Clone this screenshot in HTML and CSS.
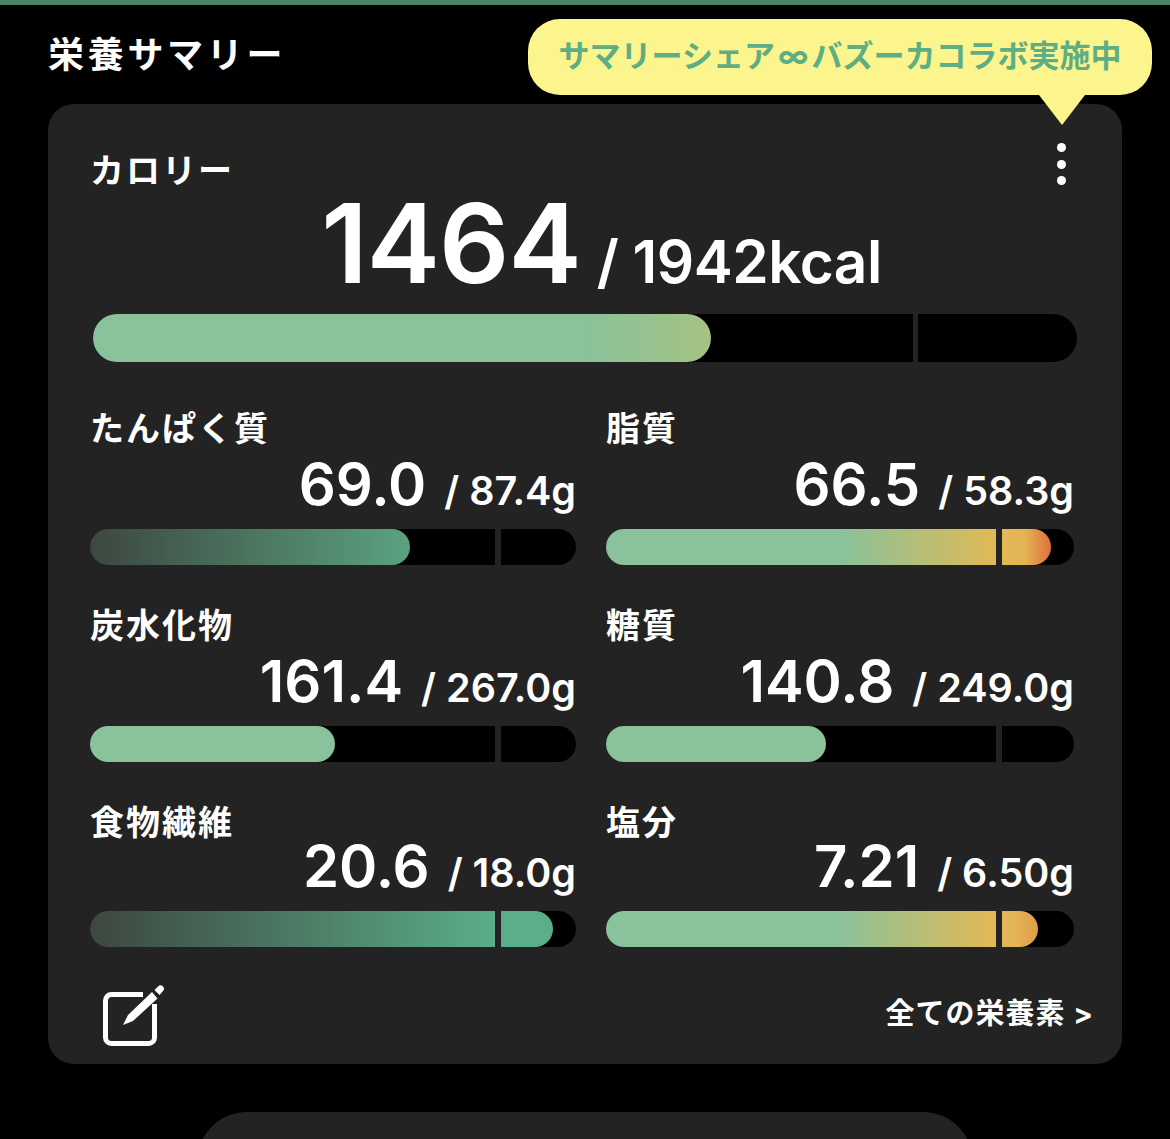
FILE: index.html
```html
<!DOCTYPE html>
<html lang="ja">
<head>
    <meta charset="UTF-8">
    <meta name="viewport" content="width=device-width, initial-scale=1.0">
    <title>栄養サマリー</title>
    <link rel="stylesheet" href="styles.css">
</head>
<body>

    <div class="top-line"></div>

    <div class="page-head">
        <h1>栄養サマリー</h1>
        <!-- Collab bubble -->
        <div class="bubble">サマリーシェア<span class="infinity">∞</span>バズーカコラボ実施中</div>
    </div>

    <div class="card">
        <div class="more"><i></i><i></i><i></i></div>

        <div class="calorie">
            <div class="label">カロリー</div>
            <div class="calorie-value"><b>1464</b><span>/ 1942kcal</span></div>
            <div class="bar bar-main">
                <div class="fill fill-calorie" style="width: 62.8%"></div>
                <div class="tick"></div>
            </div>
        </div>

        <div class="nutrients">
            <div class="nutrient">
                <div class="label">たんぱく質</div>
                <div class="value"><b>69.0</b><span>/ 87.4g</span></div>
                <div class="bar">
                    <div class="fill fill-low" style="width: 65.8%"></div>
                    <div class="tick"></div>
                </div>
            </div>
            <div class="nutrient">
                <div class="label">脂質</div>
                <div class="value"><b>66.5</b><span>/ 58.3g</span></div>
                <div class="bar">
                    <div class="fill fill-over-red" style="width: 95%"></div>
                    <div class="tick"></div>
                </div>
            </div>
            <div class="nutrient">
                <div class="label">炭水化物</div>
                <div class="value"><b>161.4</b><span>/ 267.0g</span></div>
                <div class="bar">
                    <div class="fill fill-good" style="width: 50.4%"></div>
                    <div class="tick"></div>
                </div>
            </div>
            <div class="nutrient">
                <div class="label">糖質</div>
                <div class="value"><b>140.8</b><span>/ 249.0g</span></div>
                <div class="bar">
                    <div class="fill fill-good" style="width: 47%"></div>
                    <div class="tick"></div>
                </div>
            </div>
            <div class="nutrient tight">
                <div class="label">食物繊維</div>
                <div class="value"><b>20.6</b><span>/ 18.0g</span></div>
                <div class="bar">
                    <div class="fill fill-fiber" style="width: 95.3%"></div>
                    <div class="tick"></div>
                </div>
            </div>
            <div class="nutrient tight">
                <div class="label">塩分</div>
                <div class="value"><b>7.21</b><span>/ 6.50g</span></div>
                <div class="bar">
                    <div class="fill fill-over" style="width: 92.3%"></div>
                    <div class="tick"></div>
                </div>
            </div>
        </div>

        <div class="card-foot">
            <svg class="edit-icon" width="64" height="64" viewBox="0 0 64 64">
                <path d="M41 10.500H9.500a6 6 0 0 0-6 6v37a6 6 0 0 0 6 6h37a6 6 0 0 0 6-6V20" fill="none" stroke="#fff" stroke-width="5"/>
                <path d="M21 41 26 31 50 8 55.500 14.500 31 37Z" fill="#fff"/>
                <path d="M52.500 6 56 2.500a3.300 3.300 0 0 1 5 4.500L57.500 11Z" fill="#fff"/>
            </svg>
            <div class="all-link">全ての栄養素 &gt;</div>
        </div>
    </div>

    <div class="next-clip">
        <div class="next-card"></div>
    </div>

</body>
</html>
```

FILE: styles.css
```css
html, body {
    margin: 0;
    padding: 0;
}

body {
    position: relative;
    background-color: #000;
    color: #fff;
    font-family: Inter, "Noto Sans CJK JP", sans-serif;
}

.top-line {
    height: 5px;
    background-color: #4a8467;
}

.page-head {
    height: 99px;
    padding-left: 48px;
}

h1 {
    margin: 0;
    padding-top: 24px;
    font-size: 36px;
    line-height: 52px;
    font-weight: 700;
    letter-spacing: 3.700px;
}

.bubble {
    position: absolute;
    z-index: 2;
    left: 528px;
    top: 19px;
    width: 624px;
    height: 76px;
    border-radius: 32px;
    background-color: #fcf48d;
    color: #5dae84;
    font-size: 31px;
    font-weight: 700;
    line-height: 74px;
    text-align: center;
    white-space: nowrap;
}

.bubble::after {
    content: "";
    position: absolute;
    left: 511px;
    top: 76px;
    border-left: 23px solid transparent;
    border-right: 23px solid transparent;
    border-top: 30px solid #fcf48d;
}

.infinity {
    margin: 0 3px;
}

.card {
    position: relative;
    box-sizing: border-box;
    width: 1074px;
    height: 960px;
    margin-left: 48px;
    padding: 47px 48px 0 42px;
    border-radius: 26px;
    background-color: #232323;
}

.more {
    position: absolute;
    right: 56px;
    top: 39px;
    display: flex;
    flex-direction: column;
    gap: 7.500px;
}

.more i {
    width: 9px;
    height: 9px;
    border-radius: 50%;
    background-color: #fff;
}

.label {
    font-size: 34px;
    line-height: 40px;
    font-weight: 700;
    letter-spacing: 2px;
}

.calorie {
    margin: 0 -3px 0 0;
}

.calorie-value {
    display: flex;
    justify-content: center;
    align-items: baseline;
    height: 104px;
    margin-left: 36px;
    line-height: 104px;
}

.calorie-value b {
    font-size: 110px;
    font-weight: 600;
    letter-spacing: -1px;
}

.calorie-value span {
    margin-left: 16px;
    font-size: 58.500px;
    font-weight: 600;
    letter-spacing: -0.500px;
}

.bar {
    position: relative;
    height: 36px;
    border-radius: 18px;
    background-color: #000;
}

.bar-main {
    height: 48px;
    margin: 19px 0 0 3px;
    border-radius: 24px;
}

.fill {
    height: 100%;
    border-radius: inherit;
}

.fill-calorie {
    background: linear-gradient(90deg, #89c29b 0%, #89c29b 80%, #a5c283 100%);
}

.fill-low {
    background: linear-gradient(90deg, #3d4740 0%, #5aa27f 100%);
}

.fill-good {
    background-color: #89c29b;
}

.fill-fiber {
    background: linear-gradient(90deg, #3d4740 0%, #5aae88 88%, #5aae88 100%);
}

.fill-over {
    background: linear-gradient(90deg, #89c29b 0%, #89c29b 53%, #e2b956 90%, #e4b554 95%, #e09a46 100%);
}

.fill-over-red {
    background: linear-gradient(90deg, #89c29b 0%, #89c29b 53%, #e2b956 88%, #e3b453 94%, #e0703c 100%);
}

/* goal marker */
.tick {
    position: absolute;
    left: 83.300%;
    top: 0;
    bottom: 0;
    width: 6px;
    background-color: #232323;
}

.bar-main .tick {
    width: 5px;
}

.nutrients {
    display: grid;
    grid-template-columns: 486px 468px;
    column-gap: 30px;
    margin-top: 47px;
}

.nutrient {
    height: 197px;
}

.nutrient.tight {
    height: 185px;
}

.value {
    display: flex;
    justify-content: flex-end;
    align-items: baseline;
    height: 60px;
    margin: 5px 0 15px;
    line-height: 60px;
}

.tight .value {
    margin: -7px 0 15px;
}

.value b {
    font-size: 58px;
    font-weight: 600;
}

.value span {
    margin-left: 18px;
    font-size: 39.500px;
    font-weight: 600;
}

.card-foot {
    display: flex;
    justify-content: space-between;
    align-items: center;
    margin: -4px -20px 0 12px;
}

.edit-icon {
    display: block;
}

.all-link {
    padding-bottom: 10px;
    font-size: 29px;
    font-weight: 700;
    letter-spacing: 1px;
    white-space: nowrap;
}

/* next card, cut off by the screen edge */
.next-clip {
    height: 27px;
    margin-top: 48px;
    overflow: hidden;
}

.next-card {
    width: 776px;
    height: 120px;
    margin-left: 197px;
    border-radius: 50px;
    background-color: #232323;
}
```
